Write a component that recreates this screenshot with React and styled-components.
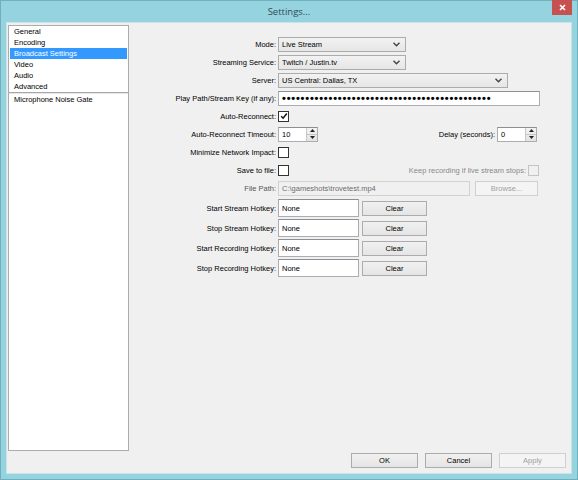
import React from 'react';
import styled, { createGlobalStyle } from 'styled-components';

const GlobalStyle = createGlobalStyle`
  html, body {
    margin: 0;
    padding: 0;
    background: #95d3df;
  }
  body {
    font-family: "Liberation Sans", Arial, sans-serif;
    font-size: 7.5px;
    color: #000;
  }
`;

const Window = styled.div`
  width: 578px;
  height: 480px;
  box-sizing: border-box;
  border: 1px solid #6fb0be;
  background: #95d3df;
  display: flex;
  flex-direction: column;
`;

const TitleBar = styled.div`
  position: relative;
  height: 21px;
  display: flex;
  align-items: center;
  justify-content: center;
  font-family: "Open Sans", "Liberation Sans", sans-serif;
  font-size: 9.5px;
  color: #2e4b58;
`;

const CloseButton = styled.div`
  position: absolute;
  top: -1px;
  right: 5px;
  width: 20px;
  height: 15px;
  background: #c75050;
  display: flex;
  align-items: center;
  justify-content: center;
`;

const Client = styled.div`
  flex: 1;
  margin: 0 5px 5px 5px;
  border: 1px solid #c6e4ea;
  background: #f0f0f0;
  display: flex;
  flex-direction: column;
  padding: 2px 5px 5px 1px;
  min-height: 0;
`;

const Main = styled.div`
  flex: 1;
  display: flex;
  min-height: 0;
`;

const List = styled.div`
  width: 121px;
  box-sizing: border-box;
  border: 1px solid #acacac;
  background: #fff;
  display: flex;
  flex-direction: column;
  padding: 0 1px;
`;

const ListItem = styled.div`
  height: 11px;
  line-height: 11px;
  padding-left: 4px;
  background: ${(p) => (p.selected ? '#3399ff' : 'transparent')};
  color: ${(p) => (p.selected ? '#fff' : '#000')};
  white-space: nowrap;
`;

const ListSeparator = styled.div`
  height: 1px;
  margin: 0 -1px;
  background: #a8a8a8;
  border-bottom: 1px solid #e6e6e6;
`;

const Form = styled.div`
  padding: 10px 0 0 1px;
  display: flex;
  flex-direction: column;
`;

const Row = styled.div`
  display: grid;
  grid-template-columns: 146px 262px;
  column-gap: 2px;
  align-items: center;
  height: ${(p) => p.h || 18}px;
  margin-top: ${(p) => p.mt || 0}px;
`;

const Label = styled.div`
  text-align: right;
  white-space: nowrap;
  color: ${(p) => (p.disabled ? '#555' : '#000')};
`;

const Controls = styled.div`
  display: flex;
  align-items: center;
  justify-content: ${(p) => (p.spread ? 'space-between' : 'flex-start')};
`;

const Group = styled.div`
  display: flex;
  align-items: center;
  gap: 2px;
  margin-right: ${(p) => p.mr || 0}px;
`;

const SideLabel = styled.span`
  white-space: nowrap;
  color: ${(p) => (p.disabled ? '#8a8a8a' : '#000')};
`;

const Select = styled.div`
  width: ${(p) => p.w}px;
  height: 15px;
  box-sizing: border-box;
  border: 1px solid #acacac;
  background: linear-gradient(#f2f2f2, #e6e6e6);
  display: flex;
  align-items: center;
  justify-content: space-between;
  padding: 0 5px 0 3px;
`;

const TextBox = styled.div`
  width: ${(p) => p.w}px;
  height: ${(p) => p.h || 15}px;
  box-sizing: border-box;
  border: 1px solid ${(p) => (p.disabled ? '#d2d2d2' : '#abadb3')};
  border-top-color: ${(p) => (p.disabled ? '#d2d2d2' : '#8e8f93')};
  background: ${(p) => (p.disabled ? '#f0f0f0' : '#fff')};
  color: ${(p) => (p.disabled ? '#6d6d6d' : '#000')};
  display: flex;
  align-items: center;
  padding-left: 3px;
  white-space: nowrap;
  overflow: hidden;
`;

const Dots = styled.span`
  font-size: 11px;
  font-weight: bold;
  letter-spacing: 0.8px;
  line-height: 11px;
`;

const Check = styled.div`
  width: 11px;
  height: 11px;
  box-sizing: border-box;
  border: 1px solid ${(p) => (p.disabled ? '#c4c4c4' : '#333')};
  background: ${(p) => (p.disabled ? '#f0f0f0' : '#fff')};
  display: flex;
  align-items: center;
  justify-content: center;
`;

const Spin = styled.div`
  width: 40px;
  height: 15px;
  box-sizing: border-box;
  border: 1px solid #abadb3;
  border-top-color: #8e8f93;
  background: #fff;
  display: flex;
`;

const SpinValue = styled.div`
  flex: 1;
  padding-left: 3px;
  display: flex;
  align-items: center;
`;

const SpinButtons = styled.div`
  width: 10px;
  display: flex;
  flex-direction: column;
  border-left: 1px solid #c8c8c8;
  background: linear-gradient(#f3f3f3, #e3e3e3);
`;

const SpinHalf = styled.div`
  flex: 1;
  display: flex;
  align-items: center;
  justify-content: center;
  border-top: ${(p) => (p.bottom ? '1px solid #c8c8c8' : 'none')};
`;

const Button = styled.div`
  width: ${(p) => p.w}px;
  height: 15px;
  box-sizing: border-box;
  border: 1px solid ${(p) => (p.disabled ? '#d0d0d0' : '#acacac')};
  background: ${(p) => (p.disabled ? '#f4f4f4' : 'linear-gradient(#f0f0f0, #e5e5e5)')};
  color: ${(p) => (p.disabled ? '#a0a0a0' : '#000')};
  display: flex;
  align-items: center;
  justify-content: center;
  margin-left: ${(p) => p.ml || 0}px;
`;

const Footer = styled.div`
  display: flex;
  justify-content: flex-end;
  gap: 7px;
  margin-top: 2px;
`;

const Chevron = () => (
  <svg width="7" height="5" viewBox="0 0 7 5">
    <path d="M0.5 0.8 L3.5 3.8 L6.5 0.8" fill="none" stroke="#444" strokeWidth="1.4" />
  </svg>
);

const Tick = () => (
  <svg width="8" height="8" viewBox="0 0 8 8">
    <path d="M1.2 4.2 L3.1 6.2 L6.8 1.5" fill="none" stroke="#111" strokeWidth="1.5" />
  </svg>
);

const Tri = ({ down }) => (
  <svg width="5" height="3" viewBox="0 0 5 3">
    <path d={down ? 'M0 0 H5 L2.5 3 Z' : 'M0 3 H5 L2.5 0 Z'} fill="#222" />
  </svg>
);

const SpinBox = ({ value }) => (
  <Spin>
    <SpinValue>{value}</SpinValue>
    <SpinButtons>
      <SpinHalf><Tri /></SpinHalf>
      <SpinHalf bottom><Tri down /></SpinHalf>
    </SpinButtons>
  </Spin>
);

const sections = ['General', 'Encoding', 'Broadcast Settings', 'Video', 'Audio', 'Advanced'];
const hotkeys = ['Start Stream Hotkey:', 'Stop Stream Hotkey:', 'Start Recording Hotkey:', 'Stop Recording Hotkey:'];

const App = () => {
  return (
    <>
      <GlobalStyle />
      <Window>
        <TitleBar>
          Settings...
          <CloseButton>
            <svg width="7" height="7" viewBox="0 0 7 7">
              <path d="M1 1 L6 6 M6 1 L1 6" stroke="#fff" strokeWidth="1.6" />
            </svg>
          </CloseButton>
        </TitleBar>
        <Client>
          <Main>
            <List>
              {sections.map((s) => (
                <ListItem key={s} selected={s === 'Broadcast Settings'}>{s}</ListItem>
              ))}
              <ListSeparator />
              <ListItem>Microphone Noise Gate</ListItem>
            </List>
            <Form>
              <Row>
                <Label>Mode:</Label>
                <Controls><Select w={128}>Live Stream<Chevron /></Select></Controls>
              </Row>
              <Row>
                <Label>Streaming Service:</Label>
                <Controls><Select w={128}>Twitch / Justin.tv<Chevron /></Select></Controls>
              </Row>
              <Row>
                <Label>Server:</Label>
                <Controls><Select w={230}>US Central: Dallas, TX<Chevron /></Select></Controls>
              </Row>
              <Row>
                <Label>Play Path/Stream Key (if any):</Label>
                <Controls>
                  <TextBox w={262}><Dots>{'•'.repeat(45)}</Dots></TextBox>
                </Controls>
              </Row>
              <Row>
                <Label>Auto-Reconnect:</Label>
                <Controls><Check><Tick /></Check></Controls>
              </Row>
              <Row>
                <Label>Auto-Reconnect Timeout:</Label>
                <Controls spread>
                  <SpinBox value="10" />
                  <Group mr={3}>
                    <SideLabel>Delay (seconds):</SideLabel>
                    <SpinBox value="0" />
                  </Group>
                </Controls>
              </Row>
              <Row>
                <Label>Minimize Network Impact:</Label>
                <Controls><Check /></Controls>
              </Row>
              <Row>
                <Label>Save to file:</Label>
                <Controls spread>
                  <Check />
                  <Group mr={1}>
                    <SideLabel disabled>Keep recording if live stream stops:</SideLabel>
                    <Check disabled />
                  </Group>
                </Controls>
              </Row>
              <Row>
                <Label disabled>File Path:</Label>
                <Controls>
                  <TextBox w={192} disabled>C:\gameshots\trovetest.mp4</TextBox>
                  <Button w={63} ml={5} disabled>Browse...</Button>
                </Controls>
              </Row>
              {hotkeys.map((h, i) => (
                <Row key={h} h={20} mt={i === 0 ? 1 : 0}>
                  <Label>{h}</Label>
                  <Controls>
                    <TextBox w={81} h={18}>None</TextBox>
                    <Button w={65} ml={3}>Clear</Button>
                  </Controls>
                </Row>
              ))}
            </Form>
          </Main>
          <Footer>
            <Button w={67}>OK</Button>
            <Button w={67}>Cancel</Button>
            <Button w={67} disabled>Apply</Button>
          </Footer>
        </Client>
      </Window>
    </>
  );
};

export default App;
